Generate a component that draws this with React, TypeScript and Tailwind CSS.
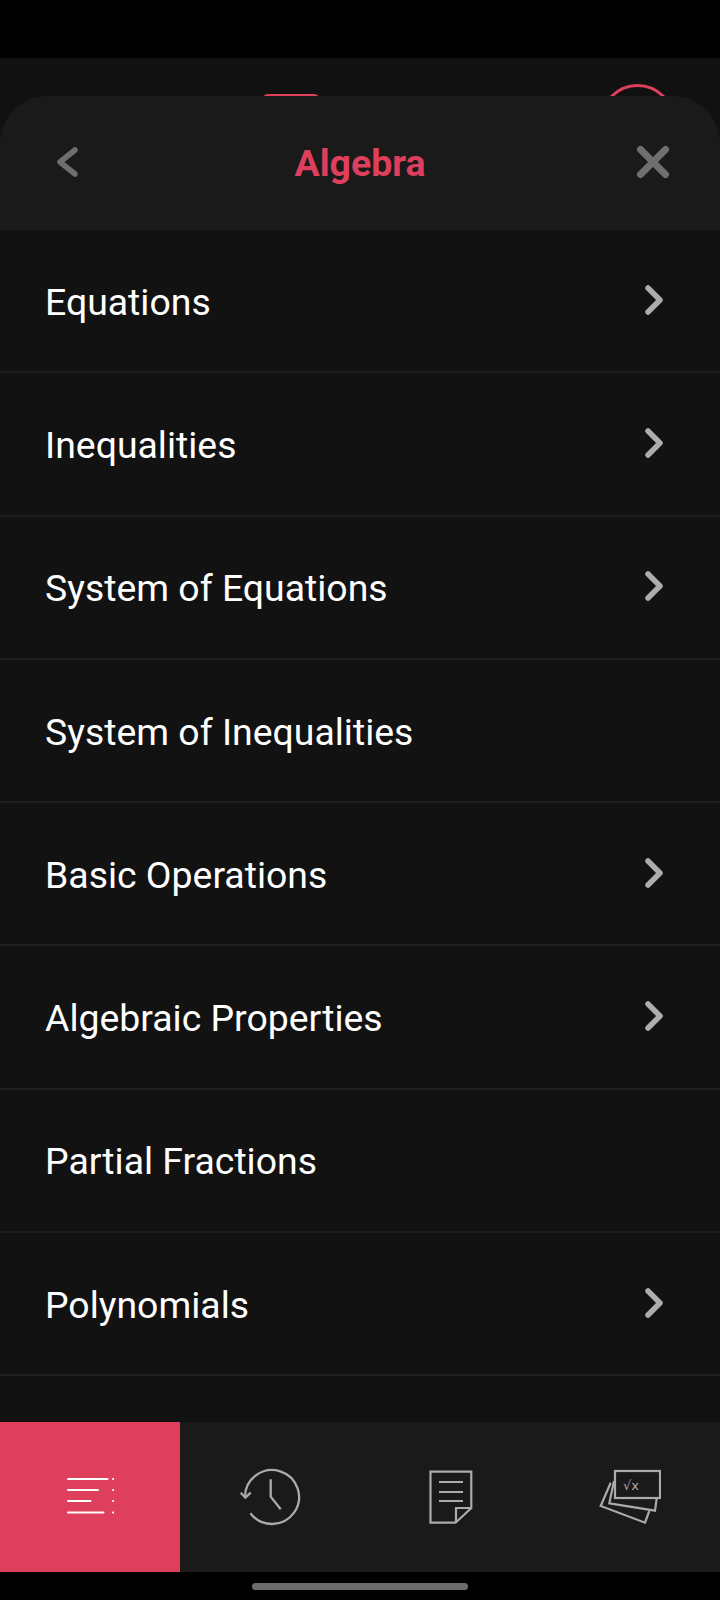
const rows: { label: string; chevron: boolean }[] = [
  { label: "Equations", chevron: true },
  { label: "Inequalities", chevron: true },
  { label: "System of Equations", chevron: true },
  { label: "System of Inequalities", chevron: false },
  { label: "Basic Operations", chevron: true },
  { label: "Algebraic Properties", chevron: true },
  { label: "Partial Fractions", chevron: false },
  { label: "Polynomials", chevron: true },
];

function Chevron() {
  return (
    <svg width="22" height="34" viewBox="0 0 22 34" fill="none" className="mr-[54px] -mt-[2px]">
      <path d="M4 5 L16 17 L4 29" stroke="#adadad" strokeWidth="5.5" strokeLinecap="round" strokeLinejoin="round" />
    </svg>
  );
}

function MenuIcon() {
  return (
    <svg width="48" height="38" viewBox="0 0 48 38" fill="none" stroke="#fff" strokeWidth="2" strokeLinecap="round">
      <path d="M2 1 H41.5" />
      <path d="M2 12 H32" />
      <path d="M2 23 H24.5" />
      <path d="M2 34.5 H37.5" />
      <path d="M47 1 h.6 M47 12 h.6 M47 23 h.6 M47 34.5 h.6" />
    </svg>
  );
}

function ClockIcon() {
  return (
    <svg width="64" height="58" viewBox="0 0 64 58" fill="none" stroke="#ababab" strokeWidth="2.3">
      <path d="M7 29 A27 27 0 1 1 12.4 45.2" />
      <path d="M2.7 24.7 L7.4 29.7 L12.7 24.7" />
      <path d="M32.7 11.3 V28.7 L42.7 41.3" />
    </svg>
  );
}

function DocIcon() {
  return (
    <svg width="46" height="54" viewBox="0 0 46 54" fill="none" stroke="#ababab" strokeWidth="2.2">
      <path d="M3.5 1.7 H44.3 V38 L28.5 52.7 H3.5 Z" />
      <path d="M29 52.7 V38 H44.3" />
      <path d="M12 12 H36 M12 22 H36 M12 31 H36" />
    </svg>
  );
}

function CardsIcon() {
  return (
    <svg width="62" height="56" viewBox="0 0 62 56" fill="none" stroke="#ababab" strokeWidth="2.2">
      <rect x="16" y="2" width="45" height="27" />
      <path d="M15 12 L10.3 34.3 L56 41.7 L57.7 29.3" />
      <path d="M11.7 13.7 L1.7 37 L46 53.7 L50.3 42" />
      <text
        x="24"
        y="20.5"
        fill="#ababab"
        stroke="none"
        fontSize="13"
        fontFamily="'DejaVu Sans', sans-serif"
      >
        √x
      </text>
    </svg>
  );
}

export default function App() {
  return (
    <div className="w-[720px] h-[1600px] bg-black flex flex-col overflow-hidden font-['Roboto',sans-serif]">
      <div className="h-[58px] shrink-0 bg-black" />
      <div className="relative h-[38px] shrink-0 bg-[#111111] overflow-hidden">
        <div className="absolute left-[262px] top-[36px] w-[58px] h-[20px] rounded-t-[6px] bg-[#dd3f5d]" />
        <div className="absolute left-[600px] top-[26px] w-[75px] h-[75px] rounded-full border-[3px] border-[#dd3f5d]" />
      </div>
      <div className="bg-[#111111] shrink-0">
        <header className="relative h-[134px] bg-[#1a1a1a] rounded-t-[48px] flex items-center justify-between pl-[55px] pr-[49px]">
          <svg width="24" height="34" viewBox="0 0 24 34" fill="none" className="-mt-[3px]">
            <path d="M20 5 L5 17 L20 29" stroke="#6f6f6f" strokeWidth="5.5" strokeLinecap="round" strokeLinejoin="round" />
          </svg>
          <h1 className="absolute left-0 right-0 text-center text-[37.5px] leading-[44px] font-bold text-[#dd3f5d]">
            Algebra
          </h1>
          <svg width="36" height="36" viewBox="0 0 36 36" fill="none" className="-mt-[3px]">
            <path d="M5.5 5.5 L30.5 30.5 M30.5 5.5 L5.5 30.5" stroke="#6f6f6f" strokeWidth="7" strokeLinecap="round" />
          </svg>
        </header>
      </div>
      <main className="flex-1 bg-[#121212] min-h-0">
        {rows.map((row) => (
          <div
            key={row.label}
            className="h-[143.3px] flex items-center justify-between pl-[45px] border-b-2 border-[#1e1e1e]"
          >
            <span className="text-[37.4px] leading-[44px] mt-[2px] text-white">{row.label}</span>
            {row.chevron && <Chevron />}
          </div>
        ))}
      </main>
      <nav className="h-[150px] shrink-0 grid grid-cols-4 bg-[#1a1a1a]">
        <div className="flex items-center justify-center bg-[#dd3f5d]">
          <MenuIcon />
        </div>
        <div className="flex items-center justify-center">
          <ClockIcon />
        </div>
        <div className="flex items-center justify-center">
          <DocIcon />
        </div>
        <div className="flex items-center justify-center">
          <CardsIcon />
        </div>
      </nav>
      <div className="h-[28px] shrink-0 bg-black flex items-start justify-center pt-[11px]">
        <div className="w-[216px] h-[7px] rounded-full bg-[#6b6b6b]" />
      </div>
    </div>
  );
}
